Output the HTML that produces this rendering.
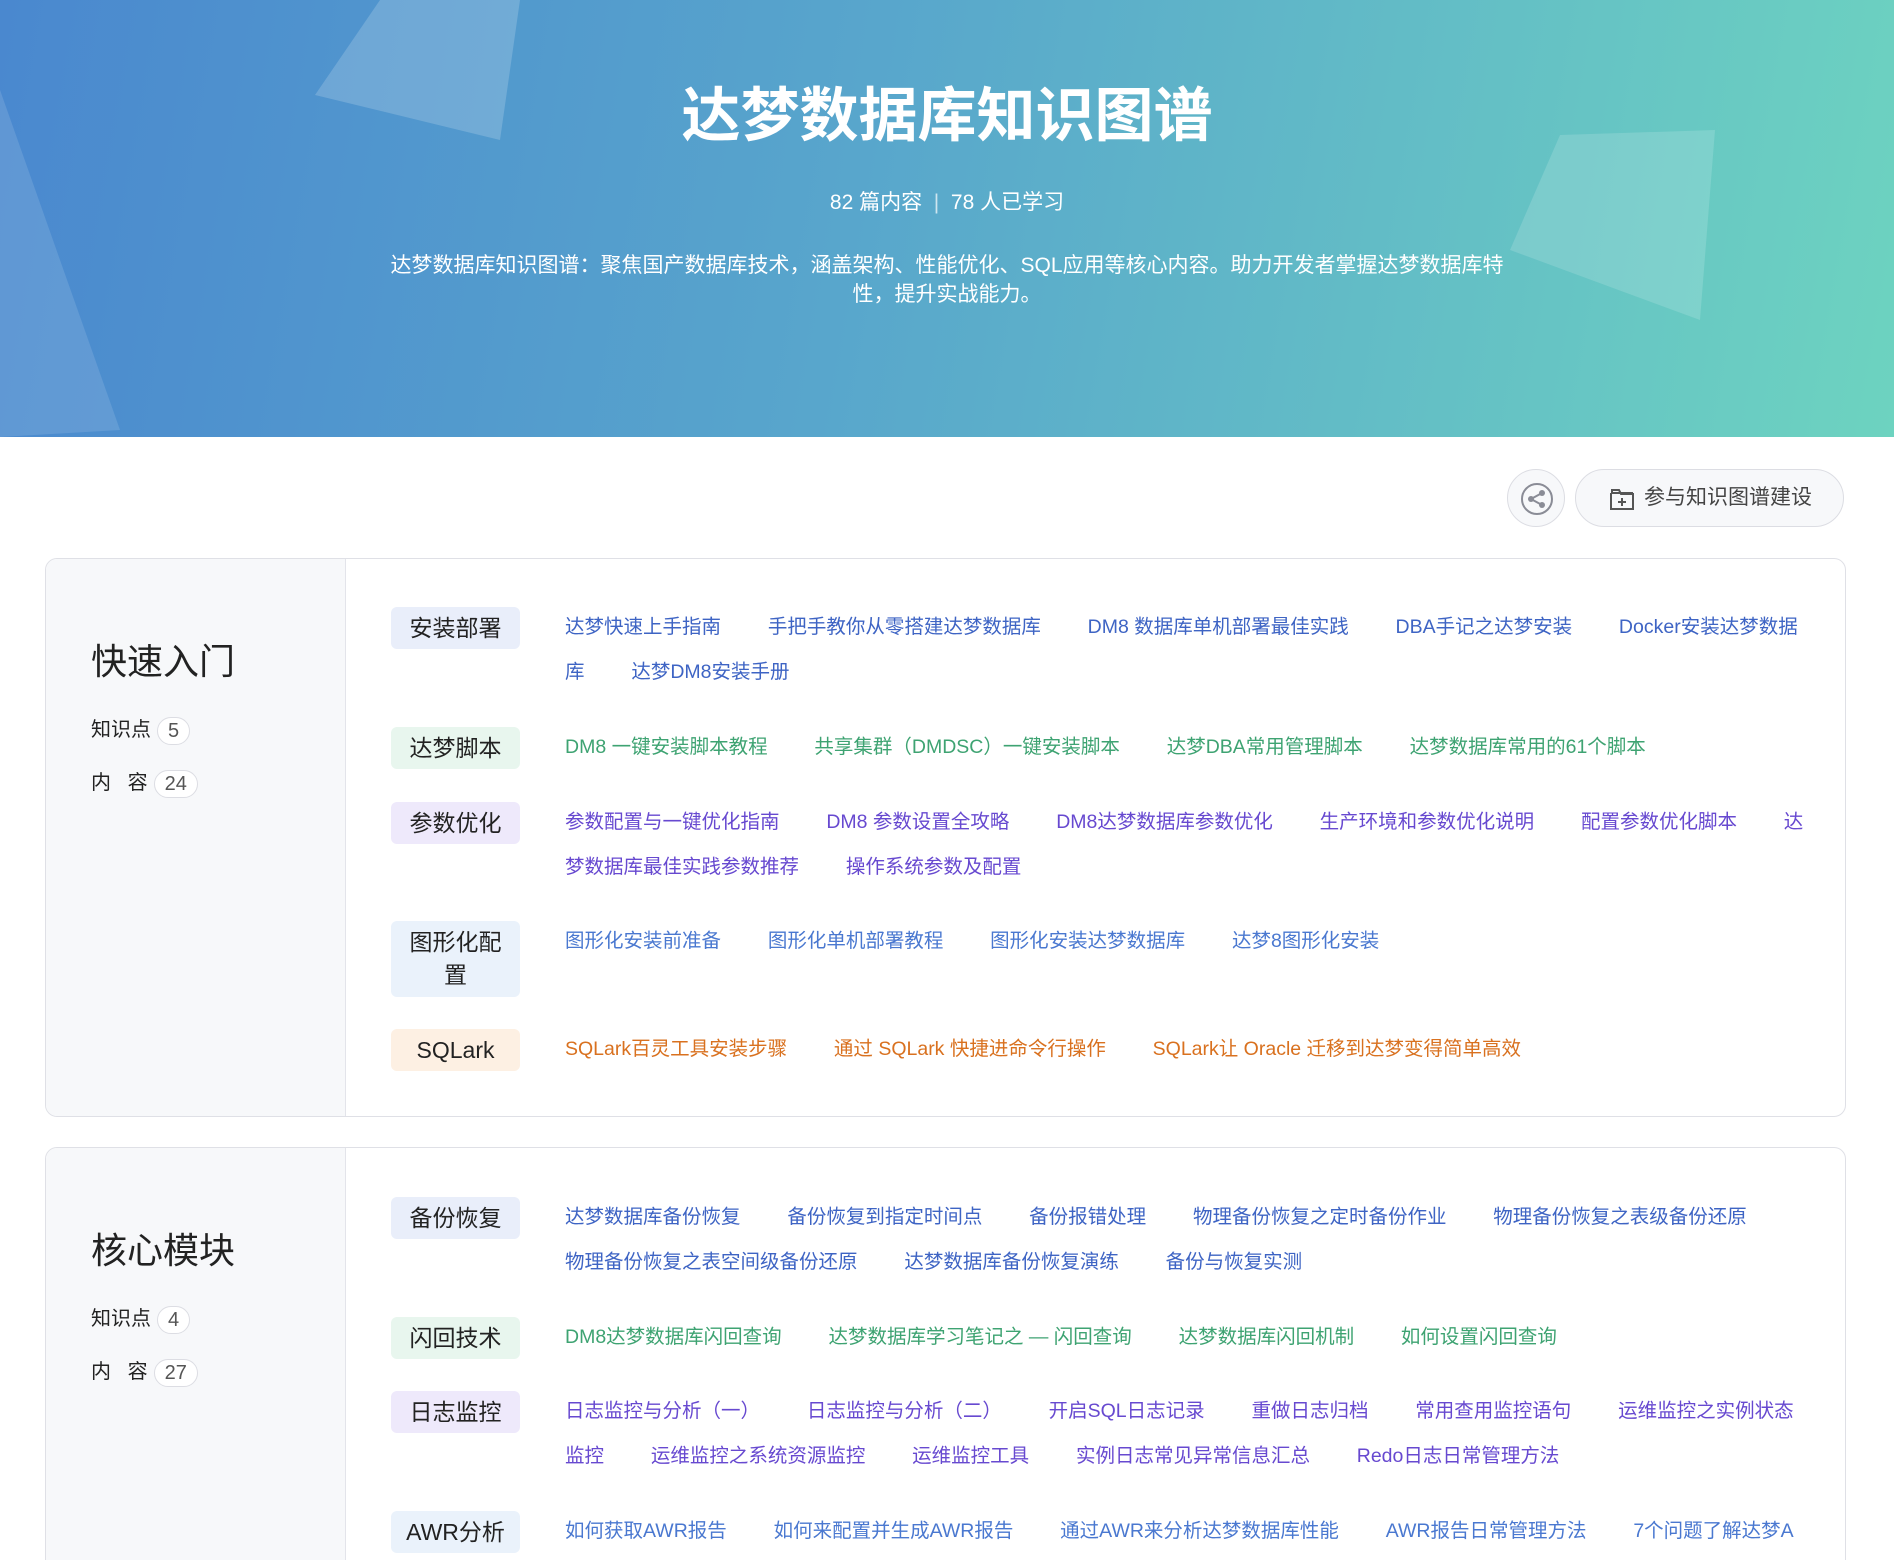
<!DOCTYPE html>
<html style="overflow:hidden;height:1560px"><head><meta charset="utf-8"><style>
*{margin:0;padding:0;box-sizing:border-box}
body{width:1894px;height:1560px;overflow:hidden;background:#fff;font-family:"Liberation Sans","Noto Sans CJK SC",sans-serif;position:relative}
.hdr{position:absolute;left:0;top:0;width:1894px;height:437px;background:linear-gradient(100deg,#4a88cf 0%,#58a6cc 45%,#6dd3c0 100%);overflow:hidden}
.hdr h1{position:absolute;top:68px;width:100%;text-align:center;color:#fff;font-size:59px;font-weight:bold;letter-spacing:0px}
.stats{position:absolute;top:186px;width:100%;text-align:center;color:#fff;font-size:21px}
.desc{position:absolute;top:251px;left:387px;width:1120px;text-align:center;color:#fff;font-size:21px;line-height:29px}
.share{position:absolute;left:1507px;top:469px;width:58px;height:58px;border:1px solid #dcdde3;border-radius:50%;background:#f7f8fa}
.join{position:absolute;left:1575px;top:469px;width:269px;height:58px;border:1px solid #dcdde3;border-radius:29px;background:#f7f8fa;font-size:21px;color:#444;line-height:56px;padding-left:68px}
.card{position:absolute;left:45px;width:1801px;border:1px solid #dfe0e6;border-radius:12px;overflow:hidden;background:#fff}
.left{position:absolute;left:0;top:0;bottom:0;width:300px;background:#f7f8fa;border-right:1px solid #e3e4ea}
.left h2{position:absolute;left:45px;font-size:36px;font-weight:normal;color:#222}
.kv{position:absolute;left:45px;font-size:20px;color:#222}
.badge{display:inline-block;border:1px solid #dcdde3;border-radius:14px;background:#fff;padding:0 10px;height:28px;line-height:26px;color:#555;font-size:20px;margin-left:6px;vertical-align:middle}
.tag{position:absolute;left:345px;width:129px;border-radius:6px;font-size:23px;color:#222;text-align:center;line-height:32px;padding:5px 0}
.links{position:absolute;left:519px;width:1242px;font-size:19.5px;line-height:45px}
.links span{margin-right:46.8px}
.b{color:#3e64c4}.g{color:#3ea372}.p{color:#6749d0}.o{color:#d9711f}.c{color:#4a78d0}
</style></head><body>
<div class="hdr">
<svg width="1894" height="437" style="position:absolute;left:0;top:0">
<polygon points="0,90 120,430 0,437" fill="rgba(255,255,255,0.12)"/>
<polygon points="380,0 520,0 500,140 315,95" fill="rgba(255,255,255,0.18)"/>
<polygon points="1560,135 1715,130 1700,320 1510,250" fill="rgba(255,255,255,0.15)"/>
</svg>
<h1>达梦数据库知识图谱</h1>
<div class="stats">82 篇内容 <span style="opacity:.7">&nbsp;|&nbsp;</span> 78 人已学习</div>
<div class="desc">达梦数据库知识图谱：聚焦国产数据库技术，涵盖架构、性能优化、SQL应用等核心内容。助力开发者掌握达梦数据库特性，提升实战能力。</div>
</div>
<div class="share"><svg width="58" height="58" viewBox="0 0 58 58"><circle cx="29" cy="29" r="15" fill="none" stroke="#8a8c96" stroke-width="2"/><circle cx="23" cy="29" r="3" fill="#8a8c96"/><circle cx="34" cy="23" r="3" fill="#8a8c96"/><circle cx="34" cy="35" r="3" fill="#8a8c96"/><path d="M23 29L34 23M23 29L34 35" stroke="#8a8c96" stroke-width="2"/></svg></div>
<div class="join"><svg width="26" height="24" viewBox="0 0 26 24" style="position:absolute;left:33px;top:17px"><path d="M2 6V22H24V7H12L10 3H3V6H24" fill="none" stroke="#555" stroke-width="2"/><path d="M13 11V19M9 15H17" stroke="#555" stroke-width="2"/></svg>参与知识图谱建设</div>

<div class="card" style="top:558px;height:559px">
<div class="left"><h2 style="top:74px">快速入门</h2>
<div class="kv" style="top:154px">知识点<span class="badge">5</span></div>
<div class="kv" style="top:207px">内&nbsp;&nbsp;&nbsp;容<span class="badge">24</span></div></div>
<div class="tag" style="top:48px;background:#e9eefa">安装部署</div>
<div class="links b" style="top:46px"><span>达梦快速上手指南</span><span>手把手教你从零搭建达梦数据库</span><span>DM8 数据库单机部署最佳实践</span><span>DBA手记之达梦安装</span><span>Docker安装达梦数据库</span><span>达梦DM8安装手册</span></div>
<div class="tag" style="top:168px;background:#e8f6ee">达梦脚本</div>
<div class="links g" style="top:166px"><span>DM8 一键安装脚本教程</span><span>共享集群（DMDSC）一键安装脚本</span><span>达梦DBA常用管理脚本</span><span>达梦数据库常用的61个脚本</span></div>
<div class="tag" style="top:243px;background:#eee9fb">参数优化</div>
<div class="links p" style="top:241px"><span>参数配置与一键优化指南</span><span>DM8 参数设置全攻略</span><span>DM8达梦数据库参数优化</span><span>生产环境和参数优化说明</span><span>配置参数优化脚本</span><span>达梦数据库最佳实践参数推荐</span><span>操作系统参数及配置</span></div>
<div class="tag" style="top:362px;background:#eaf2fb;line-height:33px">图形化配<br>置</div>
<div class="links c" style="top:360px"><span>图形化安装前准备</span><span>图形化单机部署教程</span><span>图形化安装达梦数据库</span><span>达梦8图形化安装</span></div>
<div class="tag" style="top:470px;background:#fdf0e3">SQLark</div>
<div class="links o" style="top:468px"><span>SQLark百灵工具安装步骤</span><span>通过 SQLark 快捷进命令行操作</span><span>SQLark让 Oracle 迁移到达梦变得简单高效</span></div>
</div>

<div class="card" style="top:1147px;height:430px">
<div class="left"><h2 style="top:74px">核心模块</h2>
<div class="kv" style="top:154px">知识点<span class="badge">4</span></div>
<div class="kv" style="top:207px">内&nbsp;&nbsp;&nbsp;容<span class="badge">27</span></div></div>
<div class="tag" style="top:49px;background:#e9eefa">备份恢复</div>
<div class="links b" style="top:47px"><span>达梦数据库备份恢复</span><span>备份恢复到指定时间点</span><span>备份报错处理</span><span>物理备份恢复之定时备份作业</span><span>物理备份恢复之表级备份还原</span><span>物理备份恢复之表空间级备份还原</span><span>达梦数据库备份恢复演练</span><span>备份与恢复实测</span></div>
<div class="tag" style="top:169px;background:#e8f6ee">闪回技术</div>
<div class="links g" style="top:167px"><span>DM8达梦数据库闪回查询</span><span>达梦数据库学习笔记之 — 闪回查询</span><span>达梦数据库闪回机制</span><span>如何设置闪回查询</span></div>
<div class="tag" style="top:243px;background:#eee9fb">日志监控</div>
<div class="links p" style="top:241px"><span>日志监控与分析（一）</span><span>日志监控与分析（二）</span><span>开启SQL日志记录</span><span>重做日志归档</span><span>常用查用监控语句</span><span>运维监控之实例状态监控</span><span>运维监控之系统资源监控</span><span>运维监控工具</span><span>实例日志常见异常信息汇总</span><span>Redo日志日常管理方法</span></div>
<div class="tag" style="top:363px;background:#eaf2fb">AWR分析</div>
<div class="links c" style="top:361px;word-break:break-all"><span>如何获取AWR报告</span><span>如何来配置并生成AWR报告</span><span>通过AWR来分析达梦数据库性能</span><span>AWR报告日常管理方法</span><span>7个问题了解达梦AWR</span></div>
</div>
</body></html>
